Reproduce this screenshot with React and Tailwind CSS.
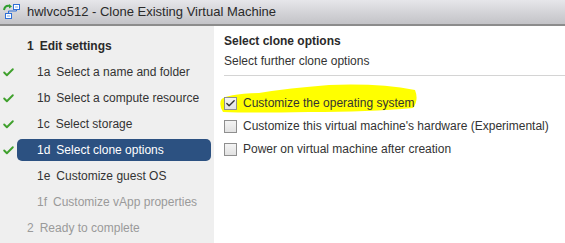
import { Check } from 'lucide-react'

const steps = [
  { id: '1', label: 'Edit settings', level: 0, state: 'header' },
  { id: '1a', label: 'Select a name and folder', level: 1, done: true },
  { id: '1b', label: 'Select a compute resource', level: 1, done: true },
  { id: '1c', label: 'Select storage', level: 1, done: true },
  { id: '1d', label: 'Select clone options', level: 1, done: true, active: true },
  { id: '1e', label: 'Customize guest OS', level: 1 },
  { id: '1f', label: 'Customize vApp properties', level: 1, disabled: true },
  { id: '2', label: 'Ready to complete', level: 0, disabled: true },
]

const options = [
  { label: 'Customize the operating system', checked: true },
  { label: "Customize this virtual machine's hardware (Experimental)", checked: false },
  { label: 'Power on virtual machine after creation', checked: false },
]

function VmIcon() {
  return (
    <svg width="18" height="18" viewBox="0 0 18 18">
      <path d="M1 7 Q2 2 7 3" fill="none" stroke="#2e9e2e" strokeWidth="2" />
      <path d="M6 1 L9 3.5 L6 5.5 Z" fill="#2e9e2e" />
      <rect x="10.5" y="1.5" width="6" height="5" fill="#fff" stroke="#2f6fd6" />
      <rect x="12" y="3" width="3" height="2" fill="#bcd3f5" />
      <rect x="2.5" y="10.5" width="6" height="5" fill="#fff" stroke="#2f6fd6" />
      <rect x="4" y="12" width="3" height="2" fill="#bcd3f5" />
      <path d="M5.5 10.5 V8 H13.5 V6.5" fill="none" stroke="#2f6fd6" />
    </svg>
  )
}

function Checkbox({ checked }) {
  return (
    <span className="flex h-[13px] w-[13px] items-center justify-center border border-[#8f8f8f] bg-gradient-to-b from-[#f4f4f4] to-[#e2e2e2]">
      {checked && <Check size={11} strokeWidth={3} className="text-[#333]" />}
    </span>
  )
}

export default function App() {
  return (
    <div
      className="flex h-[243px] w-[565px] flex-col overflow-hidden bg-white text-[12px] text-[#333]"
      style={{ fontFamily: '"Liberation Sans", Arial, sans-serif' }}
    >
      <div className="flex h-[26px] shrink-0 items-center gap-[6px] border-b-2 border-[#8c8c8c] bg-gradient-to-b from-[#e6e6ea] to-[#c3c3c7] pl-[3px]">
        <VmIcon />
        <span className="text-[13px] text-[#2a2a2a]">hwlvco512 - Clone Existing Virtual Machine</span>
      </div>

      <div className="flex flex-1">
        <div className="w-[214px] shrink-0 bg-[#efefef] pt-[7px]">
          {steps.map((s) => (
            <div key={s.id} className="flex h-[26px] items-center">
              <span className="flex w-[17px] justify-center">
                {s.done && <Check size={13} strokeWidth={3.5} className="text-[#3fa02c]" />}
              </span>
              <div
                className={
                  'flex h-[22px] w-[194px] items-center rounded-[5px] ' +
                  (s.active ? 'bg-[#2c5181] text-white ' : '') +
                  (s.level === 0 ? 'pl-[10px] ' : 'pl-[20px] ') +
                  (s.state === 'header' ? 'font-bold text-[#2a2a2a] ' : '') +
                  (s.disabled ? 'text-[#9a9a9a] ' : '')
                }
              >
                <span className="mr-[6px]">{s.id}</span>
                <span>{s.label}</span>
              </div>
            </div>
          ))}
        </div>

        <div className="flex-1 pl-[10px] pt-[6px]">
          <div className="font-bold text-[#2a2a2a]">Select clone options</div>
          <div className="mt-[2px] text-[#333]">Select further clone options</div>
          <div className="mt-[5px] border-t border-[#d4d4d4]" />

          <div className="relative mt-[20px] flex flex-col gap-[9px]">
            <svg
              className="absolute left-[-5px] top-[-12px]"
              width="200"
              height="30"
              viewBox="0 0 200 30"
            >
              <path
                d="M2 16 Q6 10 40 9 Q70 4 110 1 Q160 -1 196 6 Q200 16 194 24 Q150 28 90 28 Q30 29 4 28 Q0 22 2 16 Z"
                fill="#ffff00"
              />
            </svg>
            {options.map((o) => (
              <label key={o.label} className="relative flex h-[14px] items-center gap-[6px]">
                <Checkbox checked={o.checked} />
                <span className="text-[#333]">{o.label}</span>
              </label>
            ))}
          </div>
        </div>
      </div>
    </div>
  )
}
